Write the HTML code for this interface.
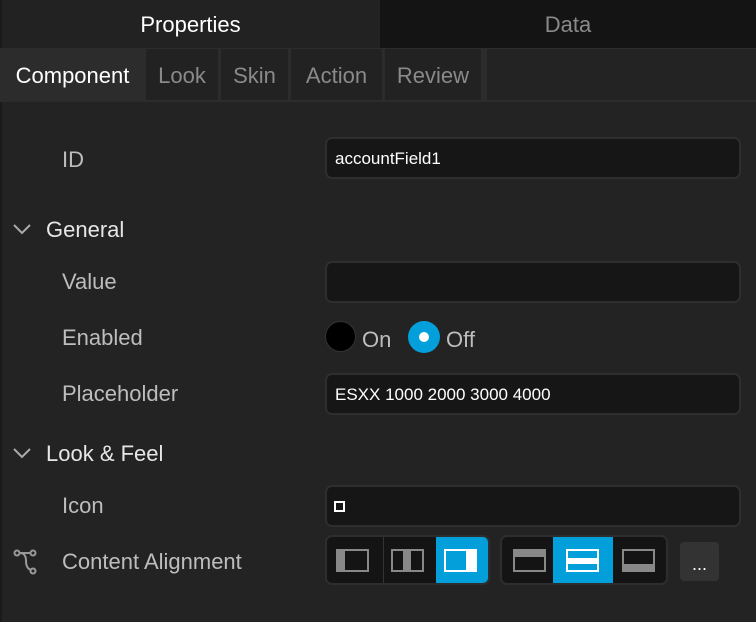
<!DOCTYPE html><html><head><style>
*{margin:0;padding:0;box-sizing:border-box}
body{width:756px;height:622px;background:#232323;font-family:"Liberation Sans",sans-serif;position:relative;overflow:hidden;color:#bdbdbd}
.a{position:absolute}
.lbl{position:absolute;left:62px;font-size:22px;color:#bdbdbd}
.hd{position:absolute;left:46px;font-size:22px;color:#e6e6e6}
.inp{position:absolute;left:325px;width:416px;height:42px;background:#161616;border:2px solid #2e2e2e;border-radius:7px;color:#fff;font-size:17px;padding:0 0 0 8px;line-height:40px}
.tab2{position:absolute;top:49px;height:51px;line-height:54px;font-size:22px;color:#8a8a8a;text-align:center;background:#222;border-right:3px solid #2c2c2c}
</style></head><body>
<div class="a" style="left:0;top:0;width:2px;height:622px;background:#1a1a1a"></div>
<div class="a" style="left:2px;top:0;width:377px;height:48px;background:#222;color:#fff;font-size:22px;text-align:center;line-height:50px">Properties</div>
<div class="a" style="left:380px;top:0;width:376px;height:48px;background:#141414;color:#8a8a8a;font-size:22px;text-align:center;line-height:50px">Data</div>
<div class="a" style="left:0;top:48px;width:756px;height:54px;background:#2c2c2c"></div>
<div class="tab2" style="left:2px;width:144px;background:#2c2c2c;color:#fff">Component</div>
<div class="tab2" style="left:146px;width:75px">Look</div>
<div class="tab2" style="left:221px;width:70px">Skin</div>
<div class="tab2" style="left:291px;width:94px">Action</div>
<div class="tab2" style="left:385px;width:99px">Review</div>
<div class="a" style="left:487px;top:49px;width:269px;height:51px;background:#232323"></div>
<div class="a" style="left:2px;top:102px;width:754px;height:520px;background:#232323"></div>

<div class="lbl" style="top:147px">ID</div>
<div class="inp" style="top:137px">accountField1</div>
<svg class="a" style="left:12px;top:222px" width="20" height="14"><path d="M2 3l8 8 8-8" stroke="#aaa" stroke-width="2" fill="none"/></svg>
<div class="hd" style="top:217px">General</div>
<div class="lbl" style="top:269px">Value</div>
<div class="inp" style="top:261px"></div>
<div class="lbl" style="top:325px">Enabled</div>
<div class="a" style="left:325px;top:321px;width:31px;height:31px;border-radius:50%;background:#000;border:1px solid #333"></div>
<div class="a" style="left:362px;top:327px;font-size:22px">On</div>
<div class="a" style="left:408px;top:321px;width:32px;height:32px;border-radius:50%;background:#029fdb"></div>
<div class="a" style="left:419px;top:332px;width:10px;height:10px;border-radius:50%;background:#fff"></div>
<div class="a" style="left:446px;top:327px;font-size:22px">Off</div>
<div class="lbl" style="top:381px">Placeholder</div>
<div class="inp" style="top:373px">ESXX 1000 2000 3000 4000</div>
<svg class="a" style="left:12px;top:446px" width="20" height="14"><path d="M2 3l8 8 8-8" stroke="#aaa" stroke-width="2" fill="none"/></svg>
<div class="hd" style="top:441px">Look &amp; Feel</div>
<div class="lbl" style="top:493px">Icon</div>
<div class="inp" style="top:485px"></div>
<div class="a" style="left:334px;top:501px;width:11px;height:11px;border:2px solid #fff"></div>
<svg class="a" style="left:12px;top:549px" width="26" height="26"><g stroke="#999" stroke-width="2" fill="none"><circle cx="5" cy="4" r="2.5"/><circle cx="21" cy="4" r="2.5"/><circle cx="21" cy="22" r="2.5"/><path d="M7.5 4h11M8 4c4 0 6 3 6 8s2 8 5 9"/></g></svg>
<div class="lbl" style="top:549px">Content Alignment</div>

<div class="a" style="left:325px;top:535px;width:165px;height:50px;background:#141414;border:2px solid #2e2e2e;border-radius:7px;overflow:hidden">
 <svg class="a" style="left:9px;top:12px" width="34" height="24"><rect x="1" y="1" width="31" height="21" fill="none" stroke="#888" stroke-width="2"/><rect x="1" y="1" width="8" height="21" fill="#888"/></svg>
 <div class="a" style="left:56px;top:0;width:1px;height:46px;background:#333"></div>
 <svg class="a" style="left:64px;top:12px" width="34" height="24"><rect x="1" y="1" width="31" height="21" fill="none" stroke="#888" stroke-width="2"/><rect x="12" y="1" width="8" height="21" fill="#888"/></svg>
 <div class="a" style="left:109px;top:0;width:54px;height:46px;background:#029fdb"></div>
 <svg class="a" style="left:117px;top:12px" width="34" height="24"><rect x="1" y="1" width="31" height="21" fill="none" stroke="#fff" stroke-width="2"/><rect x="22" y="2" width="9" height="19" fill="#fff"/></svg>
</div>
<div class="a" style="left:500px;top:535px;width:168px;height:50px;background:#141414;border:2px solid #2e2e2e;border-radius:7px;overflow:hidden">
 <svg class="a" style="left:11px;top:12px" width="34" height="24"><rect x="1" y="1" width="31" height="21" fill="none" stroke="#888" stroke-width="2"/><rect x="1" y="1" width="31" height="7" fill="#888"/></svg>
 <div class="a" style="left:51px;top:0;width:60px;height:46px;background:#029fdb"></div>
 <svg class="a" style="left:64px;top:12px" width="34" height="24"><rect x="1" y="1" width="31" height="21" fill="none" stroke="#fff" stroke-width="2"/><rect x="1" y="9" width="31" height="6" fill="#fff"/></svg>
 <svg class="a" style="left:120px;top:12px" width="34" height="24"><rect x="1" y="1" width="31" height="21" fill="none" stroke="#888" stroke-width="2"/><rect x="1" y="15" width="31" height="7" fill="#888"/></svg>
</div>
<div class="a" style="left:680px;top:542px;width:39px;height:39px;background:#333;border-radius:4px;color:#fff;text-align:center;font-size:18px;line-height:44px">...</div>
</body></html>
